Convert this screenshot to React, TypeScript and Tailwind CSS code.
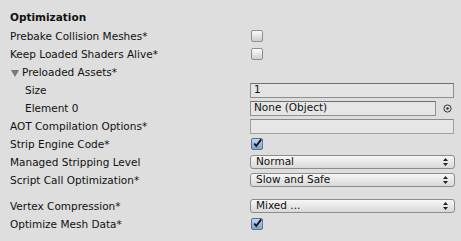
import React from 'react';

const font = { fontFamily: '"DejaVu Sans", "Liberation Sans", sans-serif' };

const Checkbox = ({ checked }: { checked?: boolean }) => (
  <div
    className={
      checked
        ? 'ml-[1px] w-[12px] h-[12px] rounded-[2px] border border-[#5a6f8c] bg-gradient-to-b from-[#c4d6ee] to-[#7ea3d4] flex items-center justify-center'
        : 'ml-[1px] w-[12px] h-[12px] rounded-[2px] border border-[#8e8e8e] bg-gradient-to-b from-[#fbfbfb] to-[#cfcfcf]'
    }
  >
    {checked && (
      <svg width="11" height="11" viewBox="0 0 11 11" className="-mt-[2px] ml-[1px]">
        <path d="M1.5 5.5 L4 8.5 L10 0.5" fill="none" stroke="#111" strokeWidth="2.2" strokeLinejoin="miter" />
      </svg>
    )}
  </div>
);

const TextField = ({ value, className = '' }: { value?: string; className?: string }) => (
  <div
    className={`h-[15px] border border-[#8f8f8f] border-t-[#6f6f6f] bg-[#e4e4e4] flex items-center pl-[3px] text-[10.5px] text-[#111] ${className}`}
  >
    {value}
  </div>
);

const Dropdown = ({ value }: { value: string }) => (
  <div className="w-[205px] h-[14px] rounded-[3px] border border-[#8c8c8c] bg-gradient-to-b from-[#f7f7f7] to-[#d9d9d9] flex items-center justify-between pl-[5px] pr-[6px] text-[10.5px] text-[#111]">
    <span>{value}</span>
    <svg width="5" height="8" viewBox="0 0 5 8">
      <path d="M2.5 0 L5 3 L0 3 Z M2.5 8 L5 5 L0 5 Z" fill="#222" />
    </svg>
  </div>
);

const Row = ({ label, indent, children }: { label: React.ReactNode; indent?: boolean; children?: React.ReactNode }) => (
  <div className="h-[18px] flex items-center">
    <div className={`w-[240px] pt-[2px] text-[10.5px] text-[#111] ${indent ? 'pl-[15px]' : ''}`}>{label}</div>
    <div className="flex-1 flex items-center">{children}</div>
  </div>
);

export default function App() {
  return (
    <div className="w-[461px] h-[241px] bg-[#dedede] pl-[10px] pt-[8px]" style={font}>
      <div className="h-[18px] flex items-center pt-[1px] text-[10.5px] font-bold text-[#111] mb-[1px]">Optimization</div>
      <Row label="Prebake Collision Meshes*">
        <Checkbox />
      </Row>
      <Row label="Keep Loaded Shaders Alive*">
        <Checkbox />
      </Row>
      <Row
        label={
          <span className="flex items-center">
            <svg width="8" height="7" viewBox="0 0 8 7" className="ml-[1px] mr-[3px]">
              <path d="M0 0 L8 0 L4 7 Z" fill="#777" />
            </svg>
            Preloaded Assets*
          </span>
        }
      />
      <Row label="Size" indent>
        <TextField value="1" className="w-[204px]" />
      </Row>
      <Row label="Element 0" indent>
        <TextField value="None (Object)" className="w-[186px] border-[#7a7a7a] bg-[#e6e6e6]" />
        <svg width="9" height="9" viewBox="0 0 9 9" className="ml-[7px]">
          <circle cx="4.5" cy="4.5" r="3.6" fill="none" stroke="#333" strokeWidth="1" />
          <circle cx="4.5" cy="4.5" r="1.3" fill="#333" />
        </svg>
      </Row>
      <Row label="AOT Compilation Options*">
        <TextField className="w-[204px] border-[#a0a0a0] border-t-[#8a8a8a] bg-[#e6e6e6]" />
      </Row>
      <Row label="Strip Engine Code*">
        <Checkbox checked />
      </Row>
      <Row label="Managed Stripping Level">
        <Dropdown value="Normal" />
      </Row>
      <Row label="Script Call Optimization*">
        <Dropdown value="Slow and Safe" />
      </Row>
      <div className="h-[8px]" />
      <Row label="Vertex Compression*">
        <Dropdown value="Mixed ..." />
      </Row>
      <Row label="Optimize Mesh Data*">
        <Checkbox checked />
      </Row>
    </div>
  );
}
